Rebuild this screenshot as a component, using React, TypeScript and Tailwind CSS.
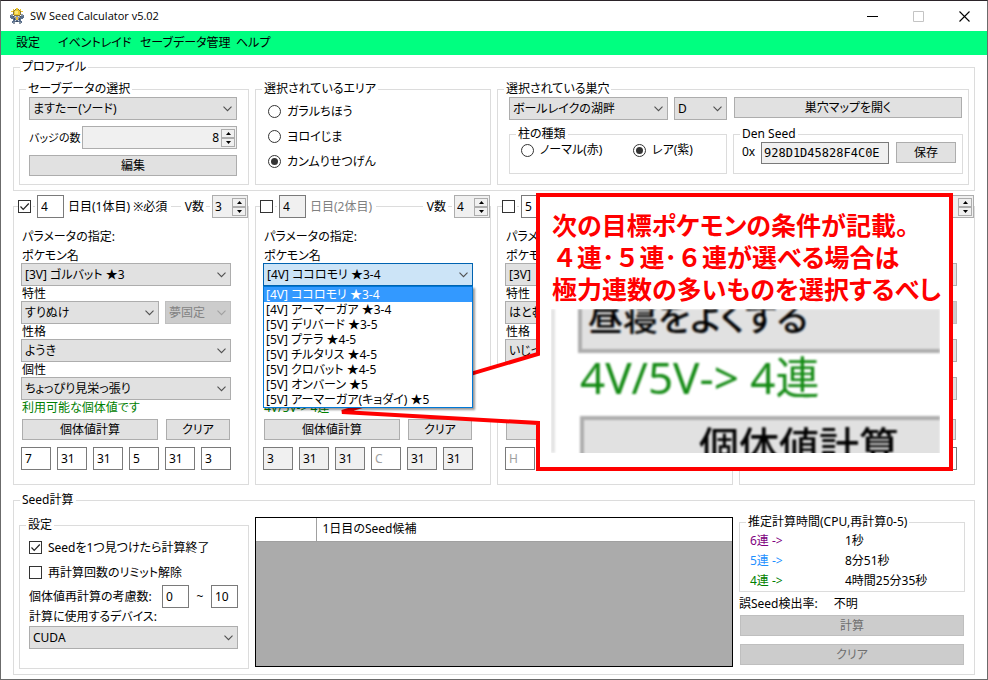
import React, { ReactNode, useId } from "react";

const inputBase =
  "block min-w-0 h-[23px] border border-[#7a7a7a] px-[3px] text-[12px] leading-4 text-black placeholder:text-[#a0a0a0] rounded-none outline-none";

function Group({
  title,
  className = "",
  children,
}: {
  title: string;
  className?: string;
  children: ReactNode;
}) {
  return (
    <fieldset className={`min-w-0 border border-[#dcdcdc] ${className}`}>
      <legend className="ml-1.5 h-4 whitespace-nowrap px-0.5 leading-4">{title}</legend>
      {children}
    </fieldset>
  );
}

function Combo({
  options,
  label,
  className = "",
  disabled = false,
  active = false,
}: {
  options: string[];
  label: string;
  className?: string;
  disabled?: boolean;
  active?: boolean;
}) {
  const look = disabled
    ? "border-[#bfbfbf] bg-[#cccccc] text-[#838383]"
    : active
      ? "border-[#0063b1] bg-[#cce4f7] text-black"
      : "border-[#adadad] bg-[#e1e1e1] text-black";
  return (
    <span className={`grid min-w-0 ${className}`}>
      <select
        aria-label={label}
        disabled={disabled}
        className={`col-start-1 row-start-1 h-[23px] w-full min-w-0 appearance-none rounded-none border pl-[3px] pr-4 text-[12px] leading-4 opacity-100 outline-none ${look}`}
      >
        {options.map((o) => (
          <option key={o}>{o}</option>
        ))}
      </select>
      <svg
        viewBox="0 0 9 6"
        className={`pointer-events-none col-start-1 row-start-1 mr-[5px] h-1.5 w-[9px] self-center justify-self-end ${disabled ? "text-[#a0a0a0]" : "text-[#505050]"}`}
        fill="none"
        stroke="currentColor"
        strokeWidth="1.1"
      >
        <path d="M0.5 0.7 4.5 4.7 8.5 0.7" />
      </svg>
    </span>
  );
}

function Btn({
  children,
  className = "",
  disabled = false,
}: {
  children?: ReactNode;
  className?: string;
  disabled?: boolean;
}) {
  return (
    <button
      disabled={disabled}
      className={`block h-[21px] border text-center leading-4 ${disabled ? "border-[#bfbfbf] bg-[#cccccc] text-[#6f6f6f]" : "border-[#adadad] bg-[#e1e1e1] text-black"} ${className}`}
    >
      {children}
    </button>
  );
}

function Spinner({
  value,
  label,
  className = "",
  alignRight = false,
}: {
  value: string;
  label: string;
  className?: string;
  alignRight?: boolean;
}) {
  const arrow = "grid h-[9px] w-3.5 place-items-center border border-[#adadad] bg-[#f0f0f0]";
  return (
    <span className={`flex h-[23px] shrink-0 items-center border border-[#adadad] bg-[#f0f0f0] pr-px ${className}`}>
      <input
        aria-label={label}
        readOnly
        value={value}
        className={`h-4 w-0 min-w-0 flex-1 px-0.5 text-[12px] leading-4 text-black outline-none ${alignRight ? "text-right" : ""}`}
      />
      <span className="flex flex-col">
        <button aria-label={`${label} +`} className={arrow}>
          <svg viewBox="0 0 5 3" className="h-[3px] w-[5px]">
            <path d="M0 3 2.5 0 5 3Z" />
          </svg>
        </button>
        <button aria-label={`${label} -`} className={arrow}>
          <svg viewBox="0 0 5 3" className="h-[3px] w-[5px]">
            <path d="M0 0 2.5 3 5 0Z" />
          </svg>
        </button>
      </span>
    </span>
  );
}

function Check({ id, checked = false, label }: { id: string; checked?: boolean; label?: string }) {
  return (
    <span className="grid shrink-0">
      <input
        id={id}
        type="checkbox"
        defaultChecked={checked}
        aria-label={label}
        className="peer col-start-1 row-start-1 size-[13px] appearance-none border border-[#333333] bg-white"
      />
      <svg
        viewBox="0 0 13 13"
        className="pointer-events-none invisible col-start-1 row-start-1 size-[13px] peer-checked:visible"
        fill="none"
        stroke="#222222"
        strokeWidth="1.2"
      >
        <path d="M2.5 6.5 5.2 9.3 10.8 3.5" />
      </svg>
    </span>
  );
}

function Radio({ name, text, checked = false }: { name: string; text: string; checked?: boolean }) {
  return (
    <label className="flex items-center gap-1.5 whitespace-nowrap leading-4">
      <input
        type="radio"
        name={name}
        defaultChecked={checked}
        className="grid size-[13px] shrink-0 appearance-none place-items-center rounded-full border border-[#333333] bg-white checked:before:size-[7px] checked:before:rounded-full checked:before:bg-[#333333]"
      />
      {text}
    </label>
  );
}

const candidates = [
  "[4V] ココロモリ ★3-4",
  "[4V] アーマーガア ★3-4",
  "[5V] デリバード ★3-5",
  "[5V] プテラ ★4-5",
  "[5V] チルタリス ★4-5",
  "[5V] クロバット ★4-5",
  "[5V] オンバーン ★5",
  "[5V] アーマーガア(キョダイ) ★5",
];

type Day = {
  day: string;
  title: string;
  muted?: boolean;
  checked?: boolean;
  vLabel: string;
  vCount: string;
  labels: string[];
  pokemon: string[];
  ability: string;
  hidden: string;
  nature: string;
  trait: string;
  message: string;
  actions: string[];
  open?: boolean;
  ivs: string[];
  placeholders: string[];
  readOnlyIvs?: boolean;
};

const allLabels = ["パラメータの指定:", "ポケモン名", "特性", "性格", "個性"];
const stats = ["H", "A", "B", "C", "D", "S"];
const emptyIvs = ["", "", "", "", "", ""];

const days: Day[] = [
  {
    day: "4",
    title: "日目(1体目) ※必須",
    checked: true,
    vLabel: "V数",
    vCount: "3",
    labels: allLabels,
    pokemon: ["[3V] ゴルバット ★3"],
    ability: "すりぬけ",
    hidden: "夢固定",
    nature: "ようき",
    trait: "ちょっぴり見栄っ張り",
    message: "利用可能な個体値です",
    actions: ["個体値計算", "クリア"],
    ivs: ["7", "31", "31", "5", "31", "3"],
    placeholders: stats,
  },
  {
    day: "4",
    title: "日目(2体目)",
    muted: true,
    vLabel: "V数",
    vCount: "4",
    labels: ["パラメータの指定:", "ポケモン名", "", "", ""],
    pokemon: candidates,
    ability: "",
    hidden: "",
    nature: "",
    trait: "",
    message: "4V/5V-> 4連",
    actions: ["個体値計算", "クリア"],
    open: true,
    ivs: ["3", "31", "31", "", "31", "31"],
    placeholders: stats,
    readOnlyIvs: true,
  },
  {
    day: "5",
    title: "",
    vLabel: "",
    vCount: "",
    labels: ["パラメータ", "ポケモン", "特性", "性格", ""],
    pokemon: ["[3V]"],
    ability: "はとむね",
    hidden: "",
    nature: "いじっぱり",
    trait: "",
    message: "",
    actions: ["", ""],
    ivs: emptyIvs,
    placeholders: ["H", "", "", "", "", ""],
  },
  {
    day: "",
    title: "",
    vLabel: "",
    vCount: "",
    labels: ["", "", "", "", ""],
    pokemon: [""],
    ability: "",
    hidden: "",
    nature: "",
    trait: "",
    message: "",
    actions: ["", ""],
    ivs: emptyIvs,
    placeholders: emptyIvs,
  },
];

function DayPanel({ data }: { data: Day }) {
  const id = useId();
  const rule = "h-px bg-[#dcdcdc]";
  const caption = "h-[15px] pl-px leading-[15px]";
  return (
    <fieldset className="min-w-0 border border-[#dcdcdc] pb-3.5">
      <legend className="flex h-[23px] w-full items-center whitespace-nowrap leading-4">
        <span className={`w-1 ${rule}`} />
        <Check id={id} checked={data.checked} label="有効" />
        <span className={`mx-0.5 w-0.5 ${rule}`} />
        <input
          aria-label="日目"
          defaultValue={data.day}
          className={`${inputBase} w-[27px] shrink-0 ${data.muted ? "bg-[#f0f0f0]" : "bg-white"}`}
        />
        {data.title && <span className={`ml-1 ${data.muted ? "text-[#808080]" : ""}`}>{data.title}</span>}
        <span className={`mx-1 flex-1 ${rule}`} />
        <span>{data.vLabel}</span>
        <span className={`mx-0.5 w-1 ${rule}`} />
        <Spinner value={data.vCount} label="V数" className="w-9" />
      </legend>
      <div className="pl-[7px] pr-[17px]">
        <p className="mt-[11px] h-4 pl-px leading-4">{data.labels[0]}</p>
        <p className={`mt-[3px] ${caption}`}>{data.labels[1]}</p>
        <div className="relative">
          <Combo options={data.pokemon} label="ポケモン名" active={data.open} />
          {data.open && (
            <ul
              role="listbox"
              aria-label="候補"
              className="absolute inset-x-0 top-full z-20 border border-[#0078d7] bg-white shadow-[2px_2px_2px_rgba(0,0,0,0.4)]"
            >
              {candidates.map((c, i) => (
                <li
                  key={c}
                  role="option"
                  aria-selected={i === 0}
                  className={`h-[15px] whitespace-nowrap pl-0.5 leading-[15px] ${i === 0 ? "bg-[#3399ff] text-white" : ""}`}
                >
                  {c}
                </li>
              ))}
            </ul>
          )}
        </div>
        <p className={caption}>{data.labels[2]}</p>
        <div className="flex gap-1.5">
          <Combo options={[data.ability]} label="特性" className="flex-1" />
          <Combo options={[data.hidden]} label="夢特性" className="w-[66px]" disabled />
        </div>
        <p className={caption}>{data.labels[3]}</p>
        <Combo options={[data.nature]} label="性格" />
        <p className={caption}>{data.labels[4]}</p>
        <Combo options={[data.trait]} label="個性" />
        <p className={`text-[#008000] ${caption}`}>{data.message}</p>
        <div className="mt-1 flex gap-2 px-px">
          <Btn className="flex-1">{data.actions[0]}</Btn>
          <Btn className="w-16">{data.actions[1]}</Btn>
        </div>
        <div className="mt-[7px] grid grid-cols-6 gap-1.5">
          {data.ivs.map((v, i) => (
            <input
              key={stats[i]}
              aria-label={stats[i]}
              placeholder={data.placeholders[i]}
              defaultValue={v}
              className={`${inputBase} w-full ${data.readOnlyIvs && v ? "bg-[#f0f0f0]" : "bg-white"}`}
            />
          ))}
        </div>
      </div>
    </fieldset>
  );
}

function AppIcon() {
  return (
    <svg viewBox="0 0 16 16" className="size-4" shapeRendering="crispEdges">
      <path fill="#5a6f8c" d="M1 7h2v1H1zM1 8h4v2H1zM2 10h3v1H2zM13 7h2v1h-2zM11 8h4v2h-4zM11 10h3v1h-3zM4 11h8v3H4zM3 13h3v2H3zM10 13h3v2h-3z" />
      <path fill="#8d98a6" d="M2 6h2v2H2zM12 6h2v2h-2zM5 8h6v3H5zM4 14h2v2H4zM10 14h2v2h-2z" />
      <path fill="#8a7636" d="M4 3h8v4H4zM5 2h6v1H5zM5 7h6v1H5zM6 1h4v1H6z" />
      <path fill="#efc72f" d="M7 0h2v2H7zM4 1h1v2H4zM11 1h1v2h-1zM2 3h2v1H2zM12 3h2v1h-2zM5 3h6v4H5zM6 2h4v1H6z" />
      <path fill="#fbe678" d="M6 3h3v3H6z" />
      <path fill="#3c4a60" d="M5 10h1v2H5zM10 10h1v2h-1zM7 13h2v1H7zM4 8h1v1H4zM11 8h1v1h-1z" />
      <path fill="#e8b93a" d="M7 9h2v3H7z" />
      <path fill="#d5dbe2" d="M6 8h1v1H6zM9 8h1v1H9zM6 12h1v1H6zM9 12h1v1H9z" />
    </svg>
  );
}

function TitleBar() {
  return (
    <header className="flex h-[30px] items-center pl-2 font-['Open_Sans','Noto_Sans',sans-serif]">
      <AppIcon />
      <h1 className="ml-[5px] flex-1 text-[11px] leading-4">SW Seed Calculator v5.02</h1>
      <button aria-label="最小化" className="grid h-full w-[46px] place-items-center">
        <svg viewBox="0 0 11 11" className="size-[11px]" stroke="#000000">
          <path d="M0 5.5H11" />
        </svg>
      </button>
      <button aria-label="最大化" disabled className="grid h-full w-[46px] place-items-center">
        <svg viewBox="0 0 11 11" className="size-[11px]" fill="none" stroke="#c4c4c4">
          <path d="M0.5 0.5h10v10h-10z" />
        </svg>
      </button>
      <button aria-label="閉じる" className="grid h-full w-[46px] place-items-center">
        <svg viewBox="0 0 11 11" className="size-[11px]" stroke="#000000" strokeWidth="1.1">
          <path d="M0.5 0.5 10.5 10.5M10.5 0.5 0.5 10.5" />
        </svg>
      </button>
    </header>
  );
}

function Profile() {
  return (
    <Group title="プロファイル" className="pb-[5px]">
      <div className="grid grid-cols-[230fr_236fr_472fr] gap-1.5 px-[5px] pt-1.5">
        <Group title="セーブデータの選択">
          <div className="flex flex-col gap-1.5 pb-2 pl-[9px] pr-[11px]">
            <Combo options={["ますたー(ソード)"]} label="セーブデータの選択" />
            <div className="flex items-center">
              <span className="flex-1 whitespace-nowrap text-[11px]">バッジの数</span>
              <Spinner value="8" label="バッジの数" alignRight className="w-[155px]" />
            </div>
            <Btn className="w-full">編集</Btn>
          </div>
        </Group>
        <Group title="選択されているエリア">
          <div className="grid auto-rows-[25px] pl-3 pt-0.5">
            <Radio name="area" text="ガラルちほう" />
            <Radio name="area" text="ヨロイじま" />
            <Radio name="area" text="カンムりせつげん" checked />
          </div>
        </Group>
        <Group title="選択されている巣穴">
          <div className="grid grid-cols-[218fr_230fr] gap-1.5 pl-[11px] pr-[5px]">
            <div className="flex gap-1.5">
              <Combo options={["ボールレイクの湖畔"]} label="巣穴" className="flex-1" />
              <Combo options={["D"]} label="巣穴の記号" className="w-[53px]" />
            </div>
            <Btn className="mx-px">巣穴マップを開く</Btn>
            <Group title="柱の種類">
              <div className="grid h-[31px] grid-cols-[112px_1fr] items-start pl-[11px]">
                <Radio name="pillar" text="ノーマル(赤)" />
                <Radio name="pillar" text="レア(紫)" checked />
              </div>
            </Group>
            <Group title="Den Seed">
              <div className="flex h-[31px] items-start pl-2 pr-1.5">
                <label htmlFor="den-seed" className="w-[19px] leading-5">
                  0x
                </label>
                <input
                  id="den-seed"
                  readOnly
                  value="928D1D45828F4C0E"
                  className="h-[22px] w-0 min-w-0 flex-1 border border-[#7a7a7a] bg-[#f0f0f0] px-0.5 font-['DejaVu_Sans_Mono',monospace] text-[12px] leading-4 outline-none"
                />
                <Btn className="ml-[7px] w-[60px]">保存</Btn>
              </div>
            </Group>
          </div>
        </Group>
      </div>
    </Group>
  );
}

const estimates = [
  { name: "6連 ->", time: "1秒", color: "text-[#800080]" },
  { name: "5連 ->", time: "8分51秒", color: "text-[#1e90ff]" },
  { name: "4連 ->", time: "4時間25分35秒", color: "text-[#008000]" },
];

function SeedPanel() {
  return (
    <Group title="Seed計算" className="mt-[7px] pb-[5px]">
      <div className="grid grid-cols-[230fr_478fr_226fr] gap-1.5 pl-[5px] pr-[9px] pt-1.5">
        <Group title="設定" className="mt-[3px]">
          <div className="pb-[19px] pl-[9px] pr-2.5 pt-0.5">
            <div className="flex h-[25px] items-center gap-1.5">
              <Check id="stop" checked />
              <label htmlFor="stop" className="whitespace-nowrap">
                Seedを1つ見つけたら計算終了
              </label>
            </div>
            <div className="flex h-[25px] items-center gap-1.5">
              <Check id="limit" />
              <label htmlFor="limit" className="whitespace-nowrap">
                再計算回数のリミット解除
              </label>
            </div>
            <div className="flex items-center">
              <label htmlFor="from" className="flex-1 whitespace-nowrap">
                個体値再計算の考慮数:
              </label>
              <input id="from" defaultValue="0" className={`${inputBase} w-[27px]`} />
              <span className="w-[22px] text-center">~</span>
              <input aria-label="上限" defaultValue="10" className={`${inputBase} w-[27px]`} />
            </div>
            <p className="h-[18px] leading-[18px]">計算に使用するデバイス:</p>
            <Combo options={["CUDA"]} label="計算に使用するデバイス" />
          </div>
        </Group>
        <div className="mb-0.5 mt-[3px] border border-black bg-[#ababab]">
          <table className="w-full border-collapse bg-white">
            <thead>
              <tr className="h-[23px] border-b border-[#a0a0a0]">
                <th aria-label="番号" className="w-[60px] border-r border-[#a0a0a0]" />
                <th className="px-1.5 text-left font-normal">1日目のSeed候補</th>
              </tr>
            </thead>
          </table>
        </div>
        <div>
          <Group title="推定計算時間(CPU,再計算0-5)">
            <dl className="grid auto-rows-[20px] grid-cols-[95px_1fr] pl-2.5 pt-px leading-5">
              {estimates.map((e) => (
                <React.Fragment key={e.name}>
                  <dt className={e.color}>{e.name}</dt>
                  <dd>{e.time}</dd>
                </React.Fragment>
              ))}
            </dl>
          </Group>
          <p className="flex h-[23px] items-center gap-4">
            <span>誤Seed検出率:</span>
            <span>不明</span>
          </p>
          <div className="grid gap-2 px-px">
            <Btn disabled>計算</Btn>
            <Btn disabled>クリア</Btn>
          </div>
        </div>
      </div>
    </Group>
  );
}

function Callout() {
  return (
    <aside className="pointer-events-none absolute left-[339px] top-[192px] z-10 h-[278px] w-[613px]">
      <svg viewBox="0 0 613 278" className="absolute inset-0 h-full w-full">
        <path
          d="M198 2H611V276H198V230L2 219 198 161Z"
          fill="#ffffff"
          stroke="#ff0000"
          strokeWidth="4"
        />
      </svg>
      <div className="relative ml-[211px] pt-4">
        <p className="whitespace-nowrap pl-px text-[25px] font-bold leading-8 text-[#ff0000]">
          次の目標ポケモンの条件が記載。
          <br />
          <span className="[font-feature-settings:normal]">４連･５連･６連</span>
          が選べる場合は
          <br />
          極力連数の多いものを選択するべし
        </p>
        <div className="mt-1 h-36 w-[389px] overflow-hidden">
          <div className="flex h-full border-l-4 border-[#e4e4e4] pl-[23px] blur-[1px]">
            <div className="w-full whitespace-nowrap text-[40px]">
              <div className="flex h-11 items-end overflow-hidden border-b-4 border-l-4 border-[#adadad] bg-[#e1e1e1] pl-1.5 text-[35px] font-medium leading-[62px]">
                昼寝をよくする
              </div>
              <div className="h-[63px] pl-0.5 text-[44px] leading-[48px] text-[#138a13]">4V/5V-&gt; 4連</div>
              <div className="ml-0.5 h-11 border-l-4 border-t-4 border-[#adadad] bg-[#e1e1e1] pl-[115px] font-medium leading-[52px]">
                個体値計算
              </div>
            </div>
          </div>
        </div>
      </div>
    </aside>
  );
}

export default function App() {
  return (
    <div className="relative min-h-screen overflow-hidden border border-[#6b6b6b] border-t-[#2b2329] bg-white font-['Noto_Sans','Noto_Sans_CJK_JP',sans-serif] text-[12px] leading-4 text-black [font-feature-settings:'palt']">
      <TitleBar />
      <nav className="grid h-6 grid-cols-[42px_82px_96px_auto] items-center justify-start bg-[#00ff80] pl-[15px]">
        {["設定", "イベントレイド", "セーブデータ管理", "ヘルプ"].map((m) => (
          <button key={m} className="whitespace-nowrap text-left">
            {m}
          </button>
        ))}
      </nav>
      <main className="px-3 pb-1 pt-1">
        <Profile />
        <div className="mt-1 grid grid-cols-4 gap-1.5">
          {days.map((d, i) => (
            <DayPanel key={i} data={d} />
          ))}
        </div>
        <SeedPanel />
      </main>
      <Callout />
    </div>
  );
}
